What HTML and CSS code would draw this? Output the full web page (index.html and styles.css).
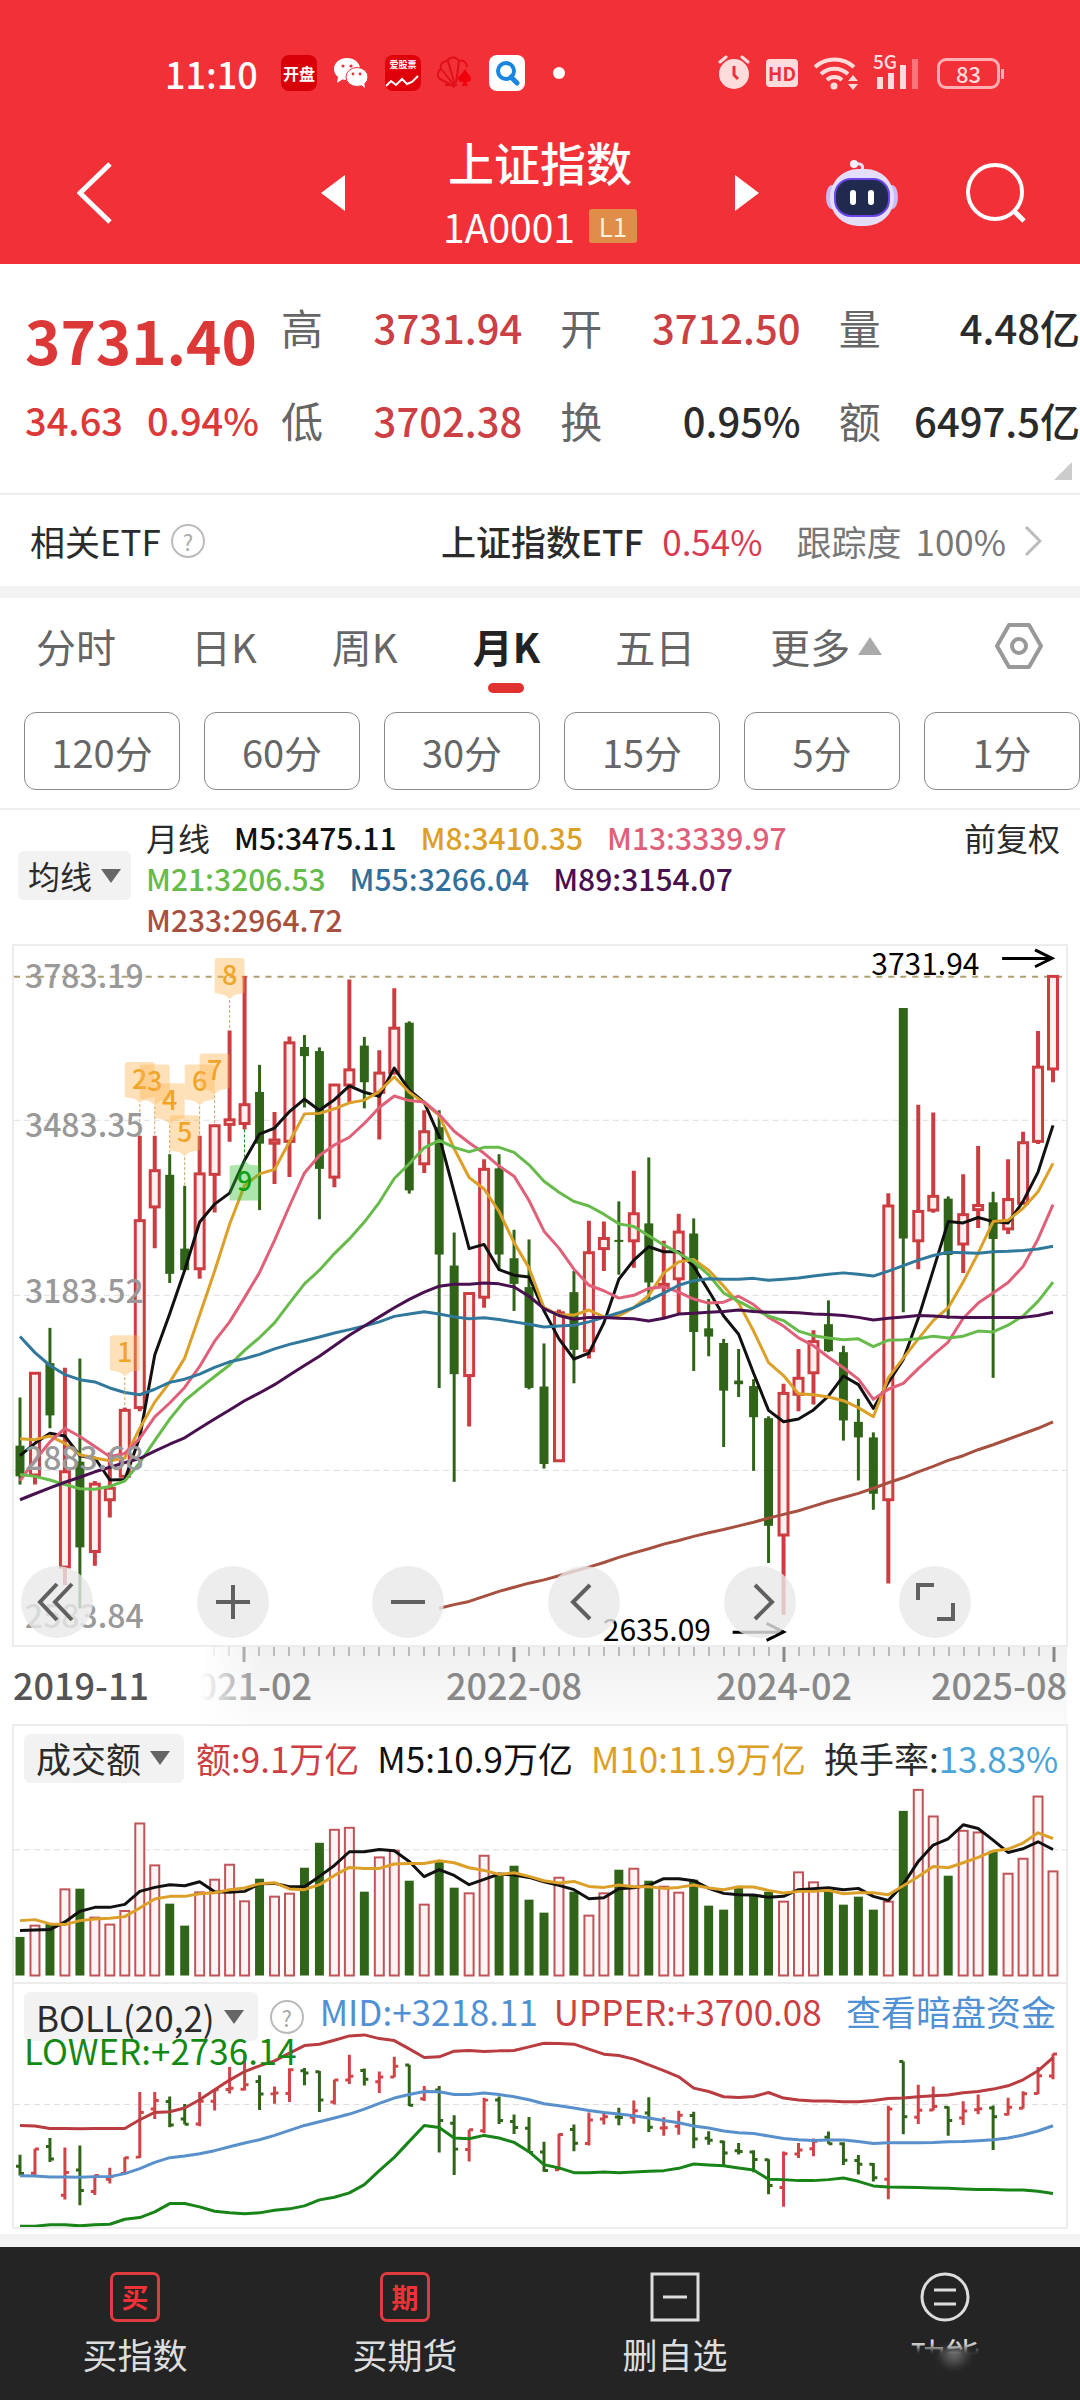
FILE: index.html
```html
<!DOCTYPE html>
<html lang="zh-CN">
<head>
  <meta charset="UTF-8">
  <meta name="viewport" content="width=device-width, initial-scale=1.0">
  <title>上证指数 1A0001</title>
  <link rel="stylesheet" href="styles.css">
</head>
<body>
  <header>
    <div class="status-bar">
      <div class="status-left">
        <span class="clock">11:10</span>
        <span class="app-icon app-kaipan">开盘</span>
        <svg width="36" height="36" viewBox="0 0 36 36">
          <ellipse cx="14" cy="14" rx="13" ry="11" fill="#fff"/>
          <path d="M5 22l-1 6 6-4z" fill="#fff"/>
          <ellipse cx="24" cy="22" rx="11" ry="9.500" fill="#fff" stroke="#f23038" stroke-width="1"/>
          <path d="M27 29l5 4-1-6z" fill="#fff"/>
          <g fill="#f23038"><circle cx="10" cy="11" r="1.600"/><circle cx="18" cy="11" r="1.600"/><circle cx="20" cy="19" r="1.400"/><circle cx="27" cy="19" r="1.400"/></g>
        </svg>
        <span class="app-icon app-stock">爱股票
          <svg width="34" height="14" viewBox="0 0 34 14"><path d="M1 11l5-5 5 4 6-6 5 5 5-2 6-6" fill="none" stroke="#fff" stroke-width="2"/></svg>
        </span>
        <svg width="36" height="36" viewBox="0 0 36 36">
          <g fill="none" stroke="#e01018" stroke-width="2"><path d="M18 32L3 24a6 6 0 0 1 1-10 6 6 0 0 1 6-8 7 7 0 0 1 12 0 6 6 0 0 1 8 6M17 30L5 15M18 30L11 6M19 28L22 6M8 30h12"/></g>
          <path d="M28 14c2 4 6 7 6 10s-4 4-5 2l2 5h-6l2-5c-1 2-6 1-6-2s5-6 7-10z" fill="#f0000a"/>
        </svg>
        <span class="app-icon app-search">
          <svg width="36" height="36" viewBox="0 0 36 36"><circle cx="17" cy="16" r="8" fill="none" stroke="#1a86e0" stroke-width="4"/><path d="M22 22l6 6" stroke="#1a86e0" stroke-width="5" stroke-linecap="round"/></svg>
        </span>
        <span class="dot"></span>
      </div>
      <div class="status-right">
        <svg width="32" height="36" viewBox="0 0 32 36">
          <circle cx="16" cy="19" r="15" fill="#ffdcdc"/>
          <path d="M2 7l6-5M30 7l-6-5" stroke="#ffdcdc" stroke-width="3" stroke-linecap="round"/>
          <path d="M16 11v9l4 4" fill="none" stroke="#f23038" stroke-width="3"/>
        </svg>
        <span class="hd">HD</span>
        <svg width="46" height="36" viewBox="0 0 46 36">
          <g fill="none" stroke="#ffdcdc" stroke-width="4"><path d="M1 12a29 29 0 0 1 39 0"/><path d="M7 19a20 20 0 0 1 27 0"/><path d="M13 25a11 11 0 0 1 15 0"/></g>
          <circle cx="20" cy="31" r="3.500" fill="#ffdcdc"/>
          <path d="M39 20l5 6H34zM39 35l5-6H34z" fill="#ffdcdc"/>
        </svg>
        <svg class="signal" width="48" height="36" viewBox="0 0 48 36">
          <text x="0" y="14" font-size="19" font-weight="500" fill="#ffdcdc">5G</text>
          <path d="M7 22v12M18 18v16M30 10v24" stroke="#ffdcdc" stroke-width="6"/>
          <path d="M42 4v30" stroke="#f8747a" stroke-width="6"/>
        </svg>
        <span class="battery">83</span>
      </div>
    </div>
    <div class="title-bar">
      <button class="back" aria-label="返回">
        <svg width="35" height="64" viewBox="0 0 35 64"><path d="M33 3L3 32l30 29" fill="none" stroke="#fff" stroke-width="5"/></svg>
      </button>
      <div class="switcher">
        <button aria-label="上一个"><svg width="24" height="36" viewBox="0 0 24 36"><path d="M24 0v36L0 18z" fill="#fff"/></svg></button>
        <div class="title">
          <h1>上证指数</h1>
          <p>1A0001 <span class="level">L1</span></p>
        </div>
        <button aria-label="下一个"><svg width="24" height="36" viewBox="0 0 24 36"><path d="M0 0v36l24-18z" fill="#fff"/></svg></button>
      </div>
      <div class="actions">
        <button aria-label="智能助手">
          <svg width="72" height="68" viewBox="0 0 72 68">
            <path d="M36 12c2-6-1-8-6-7" fill="none" stroke="#e6e0fa" stroke-width="3"/>
            <circle cx="28" cy="5" r="4" fill="#f4f0ff"/>
            <ellipse cx="6" cy="38" rx="6" ry="12" fill="#c9bcf5"/><ellipse cx="66" cy="38" rx="6" ry="12" fill="#c9bcf5"/>
            <rect x="4" y="10" width="64" height="57" rx="28" fill="#e4defa"/>
            <rect x="9" y="20" width="54" height="37" rx="16" fill="#202a4e" stroke="#6a45e8" stroke-width="2"/>
            <path d="M27 34v9M45 34v9" stroke="#fff" stroke-width="6" stroke-linecap="round"/>
          </svg>
        </button>
        <button aria-label="搜索">
          <svg width="60" height="60" viewBox="0 0 60 60"><circle cx="29" cy="29" r="27" fill="none" stroke="#fff" stroke-width="4"/><path d="M48 48l10 10" stroke="#fff" stroke-width="5"/></svg>
        </button>
      </div>
    </div>
  </header>

  <section class="quote">
    <div class="price">
      <strong>3731.40</strong>
      <p><span>34.63</span><span>0.94%</span></p>
    </div>
    <dl>
      <div><dt>高</dt><dd class="up">3731.94</dd></div>
      <div><dt>开</dt><dd class="up">3712.50</dd></div>
      <div><dt>量</dt><dd>4.48亿</dd></div>
      <div><dt>低</dt><dd class="up">3702.38</dd></div>
      <div><dt>换</dt><dd>0.95%</dd></div>
      <div><dt>额</dt><dd>6497.5亿</dd></div>
    </dl>
    <svg class="corner" width="18" height="18" viewBox="0 0 18 18"><path d="M18 0v18H0z" fill="#ccc"/></svg>
  </section>

  <a class="etf" href="#etf">
    <span>相关ETF</span>
    <span class="help">?</span>
    <span class="etf-name">上证指数ETF</span>
    <span class="etf-rate">0.54%</span>
    <span class="etf-track"><span>跟踪度</span><span>100%</span></span>
    <svg width="18" height="32" viewBox="0 0 18 32"><path d="M2 2l14 14L2 30" fill="none" stroke="#bbb" stroke-width="3"/></svg>
  </a>

  <nav class="tabs">
    <button>分时</button>
    <button>日K</button>
    <button>周K</button>
    <button class="active">月K</button>
    <button>五日</button>
    <button>更多<i class="tri-up"></i></button>
    <button class="settings" aria-label="设置">
      <svg width="50" height="48" viewBox="0 0 50 48"><path d="M15 3h20l12 21-12 21H15L3 24z" fill="none" stroke="#999" stroke-width="4" stroke-linejoin="round"/><circle cx="25" cy="24" r="7" fill="none" stroke="#999" stroke-width="4"/></svg>
    </button>
  </nav>
  <div class="periods">
    <button>120分</button>
    <button>60分</button>
    <button>30分</button>
    <button>15分</button>
    <button>5分</button>
    <button>1分</button>
  </div>

  <section class="legend">
    <button class="picker">均线<i class="tri-down"></i></button>
    <div class="ma-list">
      <p>
        <span class="cycle">月线</span>
        <span class="m5">M5:3475.11</span>
        <span class="m8">M8:3410.35</span>
        <span class="m13">M13:3339.97</span>
      </p>
      <p>
        <span class="m21">M21:3206.53</span>
        <span class="m55">M55:3266.04</span>
        <span class="m89">M89:3154.07</span>
      </p>
      <p><span class="m233">M233:2964.72</span></p>
    </div>
    <span class="adjust">前复权</span>
  </section>

  <section class="chart">
    <svg id="kline" viewBox="0 0 1054 700"></svg>
    <div class="tools">
      <button aria-label="最早"><svg viewBox="0 0 72 72"><path d="M36 18L19 36l17 18M51 18L34 36l17 18"/></svg></button>
      <button aria-label="放大"><svg viewBox="0 0 72 72"><path d="M19 36h34M36 19v34"/></svg></button>
      <button aria-label="缩小"><svg viewBox="0 0 72 72"><path d="M19 36h34"/></svg></button>
      <button aria-label="左移"><svg viewBox="0 0 72 72"><path d="M42 19L25 36l17 17"/></svg></button>
      <button aria-label="右移"><svg viewBox="0 0 72 72"><path d="M31 19l17 17-17 17"/></svg></button>
      <button aria-label="全屏"><svg viewBox="0 0 72 72"><path d="M19 34V19h16M54 37v16H38"/></svg></button>
    </div>
  </section>
  <section class="axis">
    <svg id="dates" viewBox="0 0 1054 77"></svg>
  </section>

  <section class="chart sub">
    <svg id="volume" viewBox="0 0 1054 257"></svg>
    <div class="sub-head">
      <button class="picker">成交额<i class="tri-down"></i></button>
      <span class="up">额:9.1万亿</span>
      <span class="m5">M5:10.9万亿</span>
      <span class="m8">M10:11.9万亿</span>
      <span>换手率:<b>13.83%</b></span>
    </div>
  </section>

  <section class="chart sub">
    <svg id="boll" viewBox="0 0 1054 243"></svg>
    <div class="sub-head boll-head">
      <button class="picker">BOLL(20,2)<i class="tri-down"></i></button>
      <span class="help">?</span>
      <span class="mid">MID:+3218.11</span>
      <span class="up">UPPER:+3700.08</span>
      <a href="#fund">查看暗盘资金</a>
    </div>
    <span class="lower">LOWER:+2736.14</span>
  </section>

  <footer>
    <a href="#buy"><span class="sq">买</span>买指数</a>
    <a href="#futures"><span class="sq">期</span>买期货</a>
    <a href="#remove">
      <svg width="50" height="50" viewBox="0 0 50 50"><path d="M2 2h46v46H2zM13 25h24" fill="none" stroke="#ddd" stroke-width="3"/></svg>删自选</a>
    <a href="#more" class="more">
      <svg width="50" height="50" viewBox="0 0 50 50"><circle cx="25" cy="25" r="23" fill="none" stroke="#ddd" stroke-width="3"/><path d="M14 18h22M14 32h22" stroke="#ddd" stroke-width="3"/></svg>功能</a>
  </footer>
  <script src="chart.js"></script>
</body>
</html>
```
FILE: styles.css
```css
* {
  box-sizing: border-box;
}
body {
  margin: 0;
  background-color: #fff;
  color: #2b2b2b;
  font-family: "Noto Sans CJK SC", sans-serif;
  overflow-x: hidden;
}
button {
  background: none;
  border: none;
  padding: 0;
  color: inherit;
  font: inherit;
  cursor: pointer;
}
a {
  color: inherit;
  text-decoration: none;
}
svg {
  display: block;
}
header {
  padding-bottom: 6px;
  background-color: #f23038;
  color: white;
}

/* status bar */
.status-bar {
  display: flex;
  justify-content: space-between;
  align-items: center;
  height: 128px;
  padding: 18px 80px 0 165px;
}
.status-left {
  display: flex;
  align-items: center;
  gap: 16px;
}
.clock {
  width: 100px;
  font-size: 36px;
  font-weight: 500;
}
.app-icon {
  width: 36px;
  height: 36px;
  border-radius: 8px;
  overflow: hidden;
  text-align: center;
  white-space: nowrap;
}
.app-kaipan {
  background-color: #d80008;
  font-size: 16px;
  font-weight: bold;
  line-height: 36px;
}
.app-stock {
  background-color: #e0000a;
  font-size: 9px;
  font-weight: bold;
  line-height: 20px;
}
.app-search {
  background-color: white;
}
.dot {
  width: 12px;
  height: 12px;
  margin-left: 12px;
  border-radius: 50%;
  background-color: white;
}
.status-right {
  display: flex;
  align-items: center;
  gap: 16px;
  color: #ffdcdc;
}
.signal {
  overflow: visible;
  margin-left: -3px;
}
.hd {
  width: 32px;
  height: 28px;
  border-radius: 4px;
  background-color: #ffdcdc;
  color: #f23038;
  font-size: 19px;
  font-weight: bold;
  line-height: 28px;
  text-align: center;
}
.battery {
  position: relative;
  width: 63px;
  height: 31px;
  border: 3px solid #ffb0b4;
  border-radius: 9px;
  font-size: 22px;
  font-weight: 500;
  line-height: 25px;
  text-align: center;
}
.battery::after {
  content: "";
  position: absolute;
  right: -7px;
  top: 8px;
  width: 3px;
  height: 10px;
  background-color: #ffb0b4;
}

/* title bar */
.title-bar {
  display: grid;
  grid-template-columns: 1fr 438px 1fr;
  align-items: center;
  height: 130px;
}
.back {
  justify-self: start;
  margin-left: 77px;
}
.switcher {
  display: flex;
  justify-content: space-between;
  align-items: center;
}
.title {
  text-align: center;
}
.title h1 {
  margin: 0;
  font-size: 46px;
  font-weight: 500;
  line-height: 66px;
}
.title p {
  display: flex;
  align-items: center;
  justify-content: center;
  gap: 14px;
  margin: 0;
  font-size: 39px;
  line-height: 64px;
}
.level {
  width: 48px;
  height: 34px;
  border-radius: 3px;
  background-color: #e08d4a;
  color: #fff0dc;
  font-size: 26px;
  line-height: 34px;
}
.actions {
  display: flex;
  justify-content: flex-end;
  align-items: center;
  gap: 68px;
  padding-right: 54px;
}

/* quote */
.quote {
  position: relative;
  display: flex;
  height: 231px;
  padding-top: 30px;
  border-bottom: 2px solid #eee;
}
.price {
  width: 281px;
  padding-left: 25px;
  color: #dc3838;
}
.price strong {
  display: block;
  font-size: 60px;
  line-height: 90px;
}
.price p {
  display: flex;
  gap: 24px;
  margin: 0;
  font-size: 38px;
  font-weight: 500;
  line-height: 72px;
}
.quote dl {
  flex: 1;
  display: grid;
  grid-template-columns: 241fr 240fr 241fr;
  column-gap: 38px;
  margin: 0;
  height: 186px;
}
.quote dl div {
  display: flex;
  justify-content: space-between;
  min-width: 0;
  line-height: 66px;
}
.quote dt {
  color: #666;
  font-size: 42px;
}
.quote dd {
  margin: 0;
  font-size: 40px;
  font-weight: 500;
  white-space: nowrap;
}
.up {
  color: #cc4044;
}
.corner {
  position: absolute;
  right: 8px;
  bottom: 13px;
}

/* related ETF */
.etf {
  display: flex;
  align-items: center;
  height: 103px;
  padding: 0 38px 0 30px;
  border-bottom: 12px solid #f3f3f3;
  font-size: 35px;
  white-space: nowrap;
}
.help {
  flex: none;
  width: 34px;
  height: 34px;
  margin-left: 10px;
  border: 2px solid #bbb;
  border-radius: 50%;
  color: #aaa;
  font-size: 22px;
  line-height: 30px;
  text-align: center;
}
.etf-name {
  margin-left: auto;
  font-weight: 500;
}
.etf-rate {
  margin-left: 19px;
  color: #d83a50;
}
.etf-track {
  display: flex;
  gap: 14px;
  margin: 0 18px 0 34px;
  color: #777;
}

/* tabs */
.tabs {
  display: flex;
  align-items: center;
  gap: 75px;
  height: 96px;
  padding: 0 36px;
  color: #666;
  font-size: 40px;
}
.tabs button {
  position: relative;
  display: flex;
  align-items: center;
}
.tabs .settings {
  margin-left: auto;
}
.tabs .active {
  color: #222;
  font-weight: bold;
}
.tabs .active::after {
  content: "";
  position: absolute;
  left: 50%;
  bottom: -18px;
  width: 36px;
  height: 10px;
  margin-left: -18px;
  border-radius: 5px;
  background-color: #e03030;
}
.tri-up {
  margin-left: 8px;
  border: 12px solid transparent;
  border-top: none;
  border-bottom: 18px solid #aaa;
}
.periods {
  display: grid;
  grid-template-columns: repeat(6, 1fr);
  gap: 24px;
  padding: 18px 0 18px 24px;
  border-bottom: 2px solid #eee;
}
.periods button {
  height: 78px;
  border: 1px solid #888;
  border-radius: 12px;
  color: #666;
  font-size: 38px;
}

/* moving average legend */
.legend {
  display: flex;
  align-items: flex-start;
  padding: 7px 20px 0 18px;
  min-height: 134px;
  font-size: 32px;
  line-height: 41px;
}
.picker {
  display: flex;
  align-items: center;
  height: 49px;
  padding: 0 10px;
  border-radius: 6px;
  background-color: #f2f2f2;
  white-space: nowrap;
}
.legend .picker {
  margin-top: 34px;
}
.tri-down {
  margin-left: 9px;
  border: 10px solid transparent;
  border-bottom: none;
  border-top: 14px solid #666;
}
.ma-list {
  flex: 1;
  margin-left: 15px;
  font-size: 30px;
  font-weight: 500;
  white-space: nowrap;
}
.ma-list p {
  display: flex;
  gap: 24px;
  margin: 0;
}
.cycle {
  font-size: 32px;
  font-weight: normal;
}
.m5 { color: #111; }
.m8 { color: #dca028; }
.m13 { color: #e0607a; }
.m21 { color: #66bb4a; }
.m55 { color: #30709c; }
.m89 { color: #48104e; }
.m233 { color: #a85040; }
.mid { color: #5090d4; }

/* charts */
.chart {
  position: relative;
  margin: 0 12px;
  border: 2px solid #ececec;
}
.chart > svg,
.axis svg {
  width: 100%;
  height: auto;
}
.tools {
  position: absolute;
  left: 7px;
  right: 9%;
  bottom: 7px;
  display: flex;
  justify-content: space-between;
}
.tools button {
  width: 72px;
  height: 72px;
  border-radius: 50%;
  background-color: rgba(232, 232, 232, 0.8);
}
.tools path {
  fill: none;
  stroke: #606060;
  stroke-width: 4;
}
.axis {
  padding: 0 13px;
}
.sub + .sub {
  border-top: none;
}
.sub-head {
  position: absolute;
  top: 8px;
  left: 10px;
  right: 10px;
  display: flex;
  align-items: center;
  gap: 18px;
  font-size: 35px;
  line-height: 48px;
  white-space: nowrap;
}
.sub-head b {
  color: #4aa4d8;
  font-weight: normal;
}
.sub-head .picker {
  margin-right: -6px;
  padding: 0 14px 0 12px;
}
.boll-head {
  gap: 16px;
}
.boll-head .picker {
  margin-right: -4px;
}
.boll-head .help {
  margin-left: 0;
}
.boll-head .mid,
.boll-head .up,
.boll-head a {
  margin-top: -12px;
}
.boll-head a {
  margin-left: auto;
  color: #5090d4;
}
.lower {
  position: absolute;
  left: 10px;
  top: 44px;
  color: #148a14;
  font-size: 35px;
  line-height: 44px;
}

/* bottom bar */
footer {
  display: grid;
  grid-template-columns: repeat(4, 1fr);
  height: 166px;
  margin-top: 5px;
  padding-top: 25px;
  border-top: 13px solid #f3f3f3;
  background-color: #242424;
  color: #ddd;
}
footer a {
  display: flex;
  flex-direction: column;
  align-items: center;
  gap: 6px;
  font-size: 35px;
  line-height: 52px;
}
.sq {
  width: 50px;
  height: 50px;
  border: 3px solid #e03c40;
  border-radius: 7px;
  color: #f23038;
  font-size: 27px;
  font-weight: bold;
  line-height: 43px;
  text-align: center;
}
.more {
  position: relative;
}
.more::after {
  content: "";
  position: absolute;
  left: 14%;
  right: 4%;
  top: 76px;
  height: 46px;
  background: radial-gradient(circle at 48% 10%, #777 0, #242424 18px);
  filter: blur(3px);
}
```
FILE: chart.js
```js
// one row per month: direction, high, body top, body bottom, low
const candles = [
  ['g',1018,1123,1190,1208],['r',963,965,1187,1208],['g',866,943,1057,1085],['r',953,1180,1388,1427],['g',933,1158,1345,1478],
  ['r',1200,1207,1354,1385],['r',1138,1216,1241,1280],['r',1040,1046,1190,1190],['r',447,632,1040,1048],['r',447,523,602,692],
  ['g',487,532,748,768],['g',556,693,740,740],['r',447,530,737,759],['r',423,425,531,614],['r',217,412,422,460],
  ['r',98,379,420,433],['g',292,351,464,609],['r',395,456,463,552],['r',230,244,459,537],['g',227,253,273,385],
  ['g',254,262,519,629],['r',334,336,537,559],['r',106,303,336,373],['g',231,250,330,387],['r',260,310,352,455],
  ['r',125,212,310,312],['g',197,200,566,573],['r',391,438,508,528],['g',391,428,706,997],['g',658,730,967,1202],
  ['r',790,791,970,1081],['r',498,520,799,822],['g',487,518,706,738],['g',652,714,770,829],['g',673,777,997,1000],
  ['g',900,994,1163,1173],['r',826,833,1156,1158],['g',742,788,914,987],['r',632,702,916,933],['r',634,671,693,742],
  ['g',590,674,678,750],['r',523,617,676,735],['g',494,638,767,810],['r',676,771,774,845],['r',617,657,759,835],
  ['g',627,660,875,960],['g',803,867,885,928],['g',890,899,1003,1126],['g',912,981,989,1017],['g',978,993,1061,1178],
  ['g',1059,1063,1298,1379],['r',988,1009,1318,1492],['r',912,976,1011,1048],['r',871,896,964,1033],['g',806,858,917,919],
  ['g',905,919,1068,1112],['g',1021,1071,1105,1199],['g',1094,1105,1228,1263],['r',572,600,1241,1424],['g',168,168,671,832],
  ['r',379,612,676,738],['r',396,579,609,615],['g',579,584,707,846],['r',531,619,683,746],['r',469,599,608,648],
  ['g',569,592,672,975],['r',498,586,650,661],['r',438,462,594,596],['r',218,297,459,465],['r',98,99,301,330]
];

const ma = {
  '#a85040': [1478,1470,1463,1452,1441,1432,1423,1416,1407,1397,1388,1378,1367,1357,1348,1338,1330,1321,1313,1306,1298,1290,1281,1273,1265,1255,1245,1236,1227,1216,1204,1193,1180,1168,1155,1145,1132,1121,1109,1097,1085,1071],
  '#111': [1145,1118,1096,1102,1145,1150,1198,1197,1105,925,835,740,635,596,572,500,443,430,394,367,391,368,338,352,361,299,347,374,448,570,693,684,739,751,755,829,890,934,921,855,760,718,689,700,700,732,785,840,880,965,1046,1071,1065,1045,1015,971,990,1042,985,935,845,740,634,637,625,634,637,590,526,424],
  '#dca028': [1108,1110,1102,1118,1143,1150,1156,1150,1085,1028,985,932,838,742,640,555,530,520,460,399,398,388,375,369,350,318,352,375,402,475,538,563,612,680,735,822,838,838,827,842,840,822,795,746,722,717,740,775,812,873,942,970,1010,1012,1017,1025,1040,1060,975,932,890,850,822,766,703,634,631,605,569,507],
  '#e0607a': [1200,1155,1115,1085,1103,1125,1147,1140,1107,1060,1030,996,950,895,853,800,745,675,600,528,490,467,450,420,385,360,370,373,400,437,462,485,513,535,588,655,692,738,773,785,801,795,780,776,788,803,812,810,797,815,843,862,888,905,930,953,978,1022,1000,987,955,925,897,845,812,790,767,732,672,597],
  '#66bb4a': [1186,1190,1198,1208,1217,1218,1212,1200,1160,1112,1065,1025,998,972,947,915,887,855,812,770,740,704,672,635,592,540,508,473,457,472,482,472,472,483,510,546,570,590,600,618,639,645,665,685,703,722,750,790,808,825,840,850,873,883,888,892,890,907,893,892,890,884,888,884,873,875,860,840,808,766],
  '#30789c': [885,920,948,968,979,984,997,1007,1012,1000,985,978,967,952,940,933,924,912,902,894,886,877,870,862,853,841,836,831,836,842,846,844,848,853,858,864,862,860,853,843,833,822,806,790,773,763,759,760,760,758,762,760,757,753,749,746,749,753,742,730,718,708,701,702,703,700,699,697,694,688],
  '#48104e': [1241,1228,1215,1203,1192,1180,1170,1160,1151,1135,1120,1106,1085,1065,1045,1025,1008,990,969,948,928,905,882,862,842,822,804,788,775,771,771,768,770,777,797,824,839,847,843,843,845,846,851,845,836,834,832,830,827,830,832,832,833,836,837,839,843,849,845,842,839,840,842,843,843,843,843,843,839,832]
};

const volumes = [667,630,628,521,522,606,627,586,323,449,567,633,530,492,447,557,492,543,534,459,384,342,336,531,425,405,498,567,440,519,533,420,478,453,555,594,486,531,600,533,465,459,498,513,531,495,573,585,515,543,531,558,470,500,532,570,546,585,558,288,222,302,483,345,350,408,474,429,242,467];
const volMa = {
  '#111': [648,646,645,622,590,578,578,569,530,518,510,513,501,531,533,530,507,506,516,516,485,452,411,411,404,408,440,486,465,482,510,494,478,481,488,501,512,525,552,549,522,519,512,492,492,498,521,536,540,541,548,545,525,522,519,525,521,545,557,509,440,391,372,330,341,376,413,402,381,404],
  '#dca028': [618,615,628,630,618,613,611,606,580,553,545,545,537,534,525,520,507,504,523,525,510,482,458,461,461,448,446,446,438,444,459,467,479,474,485,498,505,500,515,518,511,516,516,521,518,511,520,525,516,517,527,535,530,530,527,537,534,534,540,513,485,455,459,444,428,409,403,385,354,371]
};
const bands = {
  '#b83c40': [452,454,461,461,462,461,461,461,435,413,411,400,375,345,316,290,273,258,235,212,208,196,183,180,191,197,222,248,246,229,227,230,228,227,216,205,206,208,223,238,242,253,270,287,306,340,350,366,368,365,353,370,376,379,379,381,381,377,371,370,366,363,361,354,350,343,333,315,288,248],
  '#5890cc': [603,604,607,607,608,606,606,597,582,563,549,544,537,528,516,505,495,482,467,452,441,430,418,403,386,370,359,350,351,359,359,355,359,366,375,387,393,400,407,413,418,423,430,437,444,454,460,469,474,476,484,491,495,497,496,496,500,506,504,504,504,503,501,500,498,495,490,481,469,453],
  '#188418': [755,755,751,751,754,751,749,734,729,712,687,687,697,710,715,718,715,707,703,694,676,668,655,630,588,548,500,452,458,490,492,482,490,503,531,570,580,594,594,592,594,592,590,588,581,568,571,573,580,586,614,615,618,618,615,610,620,634,637,638,639,640,641,643,645,645,646,646,650,657]
};

const RED = '#cc3c40', GREEN = '#306418';
const x = i => 6 + i * 15;
const yK = v => v / 2.178 - 15;
const yV = v => v / 3 - 11;
const yB = v => v / 3 - 9;

function line(values, color, y, width) {
  const start = candles.length - values.length;
  const points = values.map((v, i) => `${x(i + start)},${y(v).toFixed(1)}`).join(' ');
  return `<polyline points="${points}" fill="none" stroke="${color}" stroke-width="${width}" stroke-linejoin="round"/>`;
}
function lines(set, y, width) {
  return Object.entries(set).map(([color, values]) => line(values, color, y, width)).join('');
}
function grid(y, color = '#ddd') {
  return `<path d="M0 ${y}H1054" stroke="${color}" stroke-width="1" stroke-dasharray="6 4"/>`;
}

function drawKline() {
  let out = [413, 795, 1177].map(v => grid(yK(v))).join('');
  out += `<path d="M0 ${yK(100)}H1054" stroke="#b0a070" stroke-width="2" stroke-dasharray="6 6"/>`;
  candles.forEach(([type, high, top, bottom, low], i) => {
    const cx = x(i), t = yK(top), h = Math.max(yK(bottom) - t, 2);
    if (type === 'g') {
      out += `<path d="M${cx} ${yK(high)}V${yK(low)}" stroke="${GREEN}" stroke-width="3"/>`;
      out += `<rect x="${cx - 4.5}" y="${t}" width="9" height="${h}" fill="${GREEN}"/>`;
    } else {
      out += `<path d="M${cx} ${yK(high)}V${t}M${cx} ${t + h}V${yK(low)}" stroke="${RED}" stroke-width="4"/>`;
      out += `<rect x="${cx - 4.5}" y="${t}" width="9" height="${h}" fill="#fff0f0" stroke="${RED}" stroke-width="3"/>`;
    }
  });
  out += lines(ma, yK, 3);

  // nine-turn markers: label, month, top
  [[1, 7, 882], [2, 8, 286], [3, 9, 291], [4, 10, 332], [5, 11, 402], [6, 12, 291], [7, 13, 267], [8, 14, 59]].forEach(([n, i, v]) => {
    const cx = x(i), t = yK(v);
    out += `<path d="M${cx} ${t + 42}V${yK(candles[i][1])}" stroke="#c8a860" stroke-width="1" stroke-dasharray="3 2"/>`;
    out += `<path d="M${cx - 15} ${t + 3}q0-3 3-3h24q3 0 3 3v32l-10 2-5 4-5-4-10-2z" fill="#ffb450" fill-opacity=".4"/>`;
    out += `<text x="${cx}" y="${t + 27}" font-size="27" font-weight="500" text-anchor="middle" fill="#f0a428">${n}</text>`;
  });
  out += `<path d="M${x(15)} ${yK(433)}V${yK(502)}" stroke="#188418" stroke-dasharray="3 2"/>`;
  out += `<path d="M${x(15) - 15} ${yK(512)}l10-1 5-4 5 4 10 1v35h-30z" fill="#30c030" fill-opacity=".4"/>`;
  out += `<text x="${x(15)}" y="${yK(568)}" font-size="27" font-weight="500" text-anchor="middle" fill="#10a010">9</text>`;

  [['3783.19', 124], ['3483.35', 450], ['3183.52', 812], ['2883.68', 1176], ['2583.84', 1520]].forEach(([text, v]) => {
    out += `<text x="11" y="${yK(v)}" font-size="32" font-weight="500" fill="#999">${text}</text>`;
  });
  out += `<text x="859" y="${yK(97)}" font-size="30" fill="#000">3731.94</text>`;
  out += `<path d="M990 ${yK(60)}h50M1023 ${yK(41)}l17 8.500-17 8.500" fill="none" stroke="#000" stroke-width="3"/>`;
  out += `<text x="590" y="${yK(1550)}" font-size="30" fill="#000">2635.09</text>`;
  out += `<path d="M720 ${yK(1530)}h50M754 ${yK(1511)}l17 8.500-17 8.500" fill="none" stroke="#000" stroke-width="3"/>`;
  document.getElementById('kline').innerHTML = out;
}

function drawDates() {
  let out = `<defs>
    <linearGradient id="bg" x1="0" x2="0" y1="0" y2="1"><stop offset="0" stop-color="#f0f0f0"/><stop offset="1" stop-color="#fbfbfb"/></linearGradient>
    <linearGradient id="fade"><stop offset=".75" stop-color="#fff"/><stop offset="1" stop-color="#fff" stop-opacity="0"/></linearGradient>
  </defs><rect width="1054" height="77" fill="url(#bg)"/>`;
  for (let i = 12; i < candles.length; i++) {
    const major = (i - 15) % 18 === 0;
    out += `<path d="M${x(i)} 0v${major ? 15 : 9}" stroke="${major ? '#888' : '#bbb'}" stroke-width="${major ? 3 : 2}"/>`;
  }
  out += `<g font-size="36" font-weight="500" fill="#888" text-anchor="middle"><text x="${x(15)}" y="53">2021-02</text>
    <text x="${x(33)}" y="53">2022-08</text><text x="${x(51)}" y="53">2024-02</text>
    <text x="1054" y="53" text-anchor="end">2025-08</text></g>
    <rect width="250" height="77" fill="url(#fade)"/>
    <text x="0" y="53" font-size="36" font-weight="500" fill="#555">2019-11</text>`;
  document.getElementById('dates').innerHTML = out;
}

function drawVolume() {
  let out = grid(yV(405));
  volumes.forEach((v, i) => {
    const top = yV(v), green = candles[i][0] === 'g';
    out += green
      ? `<rect x="${x(i) - 4.5}" y="${top}" width="9" height="${250 - top}" fill="${GREEN}"/>`
      : `<rect x="${x(i) - 4.5}" y="${top + 1}" width="9" height="${249 - top}" fill="#fff4f4" stroke="#c05458" stroke-width="2"/>`;
  });
  out += lines(volMa, yV, 3);
  document.getElementById('volume').innerHTML = out;
}

function drawBoll() {
  const y = v => yB(204.7 + 0.3295 * v);
  let out = grid(yB(389));
  candles.forEach(([type, high, top, bottom, low], i) => {
    const open = type === 'g' ? top : bottom, close = type === 'g' ? bottom : top;
    out += `<path d="M${x(i)} ${y(high)}V${y(low)}M${x(i) - 4} ${y(open)}h4M${x(i)} ${y(close)}h4" stroke="${type === 'g' ? GREEN : '#d04448'}" stroke-width="3"/>`;
  });
  out += lines(bands, yB, 3);
  document.getElementById('boll').innerHTML = out;
}

drawKline();
drawDates();
drawVolume();
drawBoll();
```
